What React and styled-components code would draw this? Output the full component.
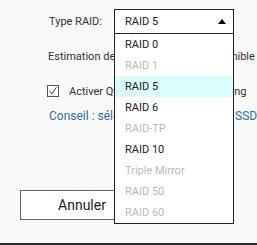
import styled, { createGlobalStyle } from "styled-components";

const Global = createGlobalStyle`
    body {
        margin: 0;
        background: #f9f9f9;
        font-family: Roboto, "Liberation Sans", sans-serif;
        color: #333;
    }
`

const options = [
    { name: 'RAID 0', enabled: true },
    { name: 'RAID 1', enabled: false },
    { name: 'RAID 5', enabled: true, active: true },
    { name: 'RAID 6', enabled: true },
    { name: 'RAID-TP', enabled: false },
    { name: 'RAID 10', enabled: true },
    { name: 'Triple Mirror', enabled: false },
    { name: 'RAID 50', enabled: false },
    { name: 'RAID 60', enabled: false },
]

export default function App() {
    return (
        <Page>
            <Global />
            <Form>
                <Row>
                    <Label>Type RAID:</Label>
                    <Select>
                        <Current>
                            <span>RAID 5</span>
                            <Caret />
                        </Current>
                        <Menu>
                            {options.map((o) => (
                                <Option key={o.name} $enabled={o.enabled} $active={o.active}>{o.name}</Option>
                            ))}
                        </Menu>
                    </Select>
                </Row>

                <Line $top={13}>Estimation de la capacité totale disponible :</Line>

                <CheckRow>
                    <svg width="12" height="12" viewBox="0 0 12 12">
                        <rect x="0.5" y="0.5" width="11" height="11" fill="#fff" stroke="#555" />
                        <polyline points="2.5,6 5,9 9.5,2" fill="none" stroke="#444" strokeWidth="1" />
                    </svg>
                    <span>Activer Qtier pour le SSD auto tiering</span>
                </CheckRow>

                <Tip>Conseil : sélectionnez des disques SSD</Tip>

                <Buttons>
                    <Button>Annuler</Button>
                </Buttons>
            </Form>
            <Bottom />
        </Page>
    )
}

const Page = styled.div`
    width: 257px;
    height: 245px;
    overflow: hidden;
`

const Form = styled.div`
    padding: 9px 0 0 48px;
    font-size: 11px;
`

const Row = styled.div`
    display: flex;
    align-items: center;
    height: 25px;
`

const Label = styled.div`
    width: 66px;
    padding-left: 1px;
    box-sizing: border-box;
    color: #333;
`

const Select = styled.div`
    position: relative;
    width: 120px;
    z-index: 2;
`

const Current = styled.div`
    height: 25px;
    box-sizing: border-box;
    border: 1px solid #222;
    background: #fff;
    display: flex;
    align-items: center;
    justify-content: space-between;
    padding: 0 7px 0 10px;
    color: #222;
    font-size: 11px;
`

const Caret = styled.div`
    width: 0;
    height: 0;
    border-left: 4px solid transparent;
    border-right: 4px solid transparent;
    border-bottom: 5px solid #000;
`

const Menu = styled.div`
    position: absolute;
    top: 25px;
    left: 0;
    width: 120px;
    box-sizing: border-box;
    border: 1px solid #222;
    border-top: none;
    background: #fff;
`

const Option = styled.div`
    height: 21px;
    line-height: 21px;
    padding-left: 10px;
    font-size: 11px;
    color: ${(p) => p.$enabled ? '#222' : '#bbb'};
    background: ${(p) => p.$active ? '#dcfcfc' : '#fff'};
`

const Line = styled.div`
    margin-top: ${(p) => p.$top}px;
    height: 20px;
    line-height: 20px;
    white-space: nowrap;
    color: #333;
`

const CheckRow = styled.div`
    margin-top: 14px;
    height: 20px;
    display: flex;
    align-items: center;
    gap: 10px;
    white-space: nowrap;
    color: #333;

    svg {
        flex-shrink: 0;
        margin-left: -1px;
    }
`

const Tip = styled.div`
    margin-top: 5px;
    height: 20px;
    line-height: 20px;
    font-size: 12px;
    color: #2d6fa8;
    white-space: nowrap;
    padding-left: 1px;
`

const Buttons = styled.div`
    display: flex;
    margin: 64px 0 0 -28px;
`

const Button = styled.div`
    width: 124px;
    height: 30px;
    box-sizing: border-box;
    border: 1px solid #666;
    background: #fff;
    display: flex;
    align-items: center;
    justify-content: center;
    font-size: 14px;
    color: #222;
`

const Bottom = styled.div`
    margin-top: 23px;
    border-top: 2px solid #2a2a2a;
`
